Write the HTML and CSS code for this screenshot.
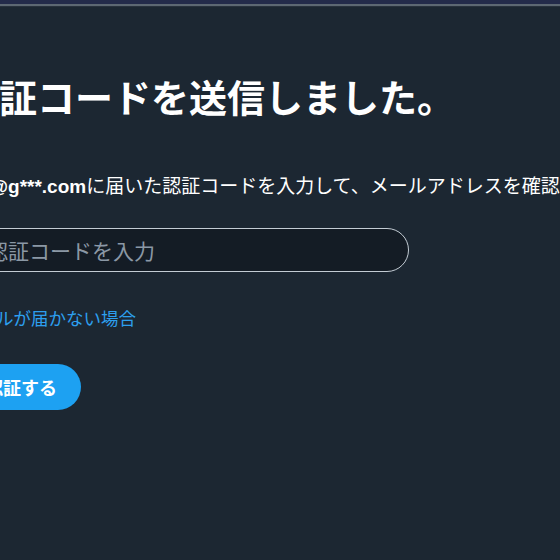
FILE: index.html
```html
<!DOCTYPE html>
<html lang="ja">
<head>
<meta charset="utf-8">
<title>認証コードを送信しました。</title>
<link rel="stylesheet" href="styles.css">
</head>
<body>
<div class="topbar"></div>
<div class="topline"></div>
<div class="topshade"></div>
<main class="main">
  <h1 class="title">認証コードを送信しました。</h1>
  <p class="desc"><b class="email">t***@g***.com</b>に届いた認証コードを入力して、メールアドレスを確認してください。</p>
  <div class="field"><span class="placeholder">認証コードを入力</span></div>
  <a class="link" href="#">メールが届かない場合</a>
  <div class="actions"><button class="btn" type="button">認証する</button></div>
</main>
</body>
</html>
```

FILE: styles.css
```css
html, body {
  margin: 0;
  padding: 0;
  background: #1c2732;
  overflow: hidden;
  width: 560px;
  height: 560px;
}
body {
  font-family: "Liberation Sans", "Noto Sans CJK JP", sans-serif;
  color: #ffffff;
}
.topbar {
  height: 4px;
  background: #232b4a;
}
.topline {
  height: 2px;
  background: #5d6873;
}
.topshade {
  height: 1px;
  background: #28323d;
}
.main {
  margin-left: -39px;
  padding-top: 66px;
  display: flex;
  flex-direction: column;
  align-items: flex-start;
  width: 900px;
}
.title {
  margin: 0;
  font-family: "Noto Sans CJK JP", sans-serif;
  font-weight: 700;
  font-size: 38px;
  line-height: 46px;
  color: #ffffff;
  white-space: nowrap;
}
.desc {
  margin: 56px 0 0;
  font-size: 19px;
  line-height: 24px;
  white-space: nowrap;
  color: #ffffff;
}
.email {
  font-weight: 700;
}
.field {
  margin-top: 29px;
  box-sizing: border-box;
  width: 448px;
  height: 44px;
  border: 1.5px solid #c3ccd4;
  border-radius: 22px;
  background: #141c25;
  display: flex;
  align-items: center;
  padding-left: 25px;
}
.placeholder {
  font-family: "Noto Sans CJK JP", sans-serif;
  font-size: 21px;
  color: #8b98a5;
}
.link {
  margin-top: 35px;
  font-family: "Noto Sans CJK JP", sans-serif;
  font-size: 17.5px;
  line-height: 22px;
  color: #2d9fee;
  text-decoration: none;
}
.actions {
  margin-top: 35px;
}
.btn {
  box-sizing: border-box;
  height: 46px;
  width: 120px;
  border: none;
  border-radius: 23px;
  background: #1da1f2;
  color: #ffffff;
  font-family: "Noto Sans CJK JP", sans-serif;
  font-weight: 700;
  font-size: 18px;
  padding: 0 24px;
}
```
